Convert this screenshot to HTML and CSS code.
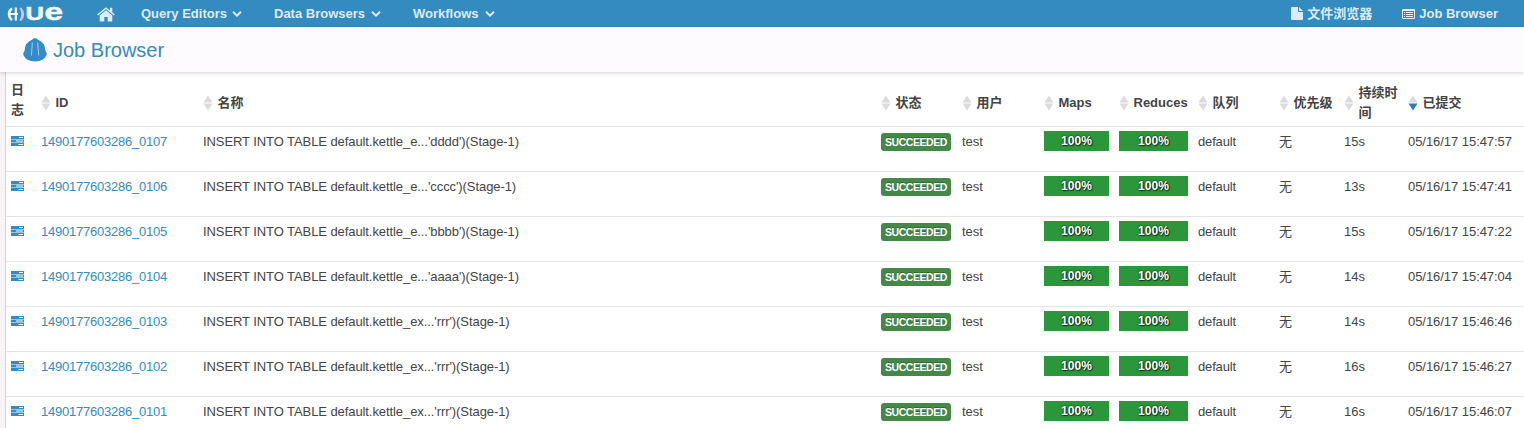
FILE: index.html
```html
<!DOCTYPE html>
<html lang="zh-CN">
<head>
<meta charset="utf-8">
<title>Job Browser</title>
<link rel="stylesheet" href="styles.css">
</head>
<body>
<svg class="defs" aria-hidden="true">
  <symbol id="chevron" viewBox="0 0 10 8"><path d="M1 1.800 5 5.600 9 1.800" fill="none" stroke="currentColor" stroke-width="2"/></symbol>
  <symbol id="tasks" viewBox="0 0 13 10"><path fill="currentColor" fill-rule="evenodd" d="M0 0h13v3H0zM8 1v1h4V1zM0 3.600h13v2.800H0zM5 4.500v1h7v-1zM0 7h13v3H0zM7.500 8v1H12V8z"/></symbol>
  <symbol id="sort" viewBox="0 0 10 16"><path class="up" d="M5 .5 9.500 7.500h-9z"/><path class="down" d="M5 15.500.5 8.500h9z"/></symbol>
</svg>
<nav class="navbar">
  <a class="logo"><svg width="58" height="27" viewBox="0 0 58 27">
    <g fill="none" stroke="#f5f8fc"><path d="M5 8.500Q2 10.500 2 14t3 6" stroke-width="2.500"/><path d="M8.800 7.500v13M2.500 14h8.500" stroke-width="2.200"/></g>
    <path d="M12.500 8q3.500 6 0 12.500l1.800.5q6-6.500 0-13.500z" fill="#cfc0f2"/>
    <text class="logo-text" x="18.500" y="20" textLength="18.500" lengthAdjust="spacingAndGlyphs">U</text>
    <text class="logo-text logo-e" x="37.500" y="20" textLength="18.500" lengthAdjust="spacingAndGlyphs">e</text>
  </svg></a>
  <a class="home"><svg width="18" height="15" viewBox="0 0 18 15"><path fill="currentColor" d="M9 3.300 15.300 8.600V14q0 .6-.6.6h-4V10H7.300v4.600h-4q-.6 0-.6-.6V8.600z"/><path fill="none" stroke="currentColor" stroke-width="1.500" d="M.6 8 9 1.200 17.400 8"/><path fill="currentColor" d="M13 .8h2.300v5L13 4z"/></svg></a>
  <a class="menu editors"><span>Query Editors</span><svg width="10" height="8"><use href="#chevron"/></svg></a>
  <a class="menu browsers"><span>Data Browsers</span><svg width="10" height="8"><use href="#chevron"/></svg></a>
  <a class="menu workflows"><span>Workflows</span><svg width="10" height="8"><use href="#chevron"/></svg></a>
  <a class="right files"><svg width="12" height="13" viewBox="0 0 12 13"><path fill="currentColor" d="M1 0h6v5h5v7q0 1-1 1H1q-1 0-1-1V1q0-1 1-1M8 0l4 4H8z"/></svg><span>文件浏览器</span></a>
  <a class="right jobs"><svg width="13" height="10" viewBox="0 0 13 10"><path fill="currentColor" fill-rule="evenodd" d="M1 0h11q1 0 1 1v8q0 1-1 1H1q-1 0-1-1V1q0-1 1-1M1 2v7h11V2z"/><path stroke="currentColor" d="M2 3.500h1M4 3.500h7M2 5.500h1M4 5.500h7M2 7.500h1M4 7.500h7"/></svg><span>Job Browser</span></a>
</nav>
<header class="subnav">
  <svg width="24" height="24" viewBox="0 0 24 24"><path fill="#338bc8" d="M9.500 1.500Q9.500.3 12 .3t2.500 1.200Q22 4 22.500 13q1.500 1.500 1.300 3.500Q21 23.500 12 23.500T.2 16.500Q0 14.500 1.500 13 2 4 9.500 1.500"/><path d="M9.300 4.500 8.500 17.500M14.700 4.500l1 13" stroke="#a5cdea" fill="none"/></svg>
  <h1>Job Browser</h1>
</header>
<main class="panel">
<table>
  <colgroup><col class="c-log"><col class="c-id"><col class="c-name"><col class="c-status"><col class="c-user"><col class="c-maps"><col class="c-reduces"><col class="c-queue"><col class="c-priority"><col class="c-duration"><col class="c-date"></colgroup>
  <thead><tr id="head"></tr></thead>
  <tbody id="jobs"></tbody>
</table>
</main>
<script src="jobs.js"></script>
</body>
</html>
```
FILE: styles.css
```css
* { box-sizing: border-box; }
body {
  margin: 0;
  height: 428px;
  overflow: hidden;
  background: #f7f3f7;
  color: #444;
  font: 13px/20px "Liberation Sans", Arial, "Noto Sans CJK SC", sans-serif;
}
.defs { position: absolute; width: 0; height: 0; }
.navbar {
  display: flex;
  align-items: center;
  height: 27px;
  padding: 0 26px 0 7px;
  background: #338bbf;
  color: #dcebf7;
  font-weight: bold;
}
.navbar a { display: flex; align-items: center; white-space: nowrap; }
.navbar svg { display: block; flex: none; }
.navbar span { padding-top: 1px; }
.logo { width: 90px; }
.logo svg { overflow: visible; }
.logo-text { fill: #f5f8fc; stroke: #f5f8fc; stroke-width: .5px; font: bold 18px "Liberation Sans", sans-serif; }
.logo-e { font-size: 23px; }
.home { width: 44px; padding-top: 1px; }
.menu { justify-content: space-between; padding-top: 1px; }
.menu span { padding: 0; }
.editors { width: 101px; }
.browsers { width: 107px; margin-left: 32px; }
.workflows { width: 82px; margin-left: 32px; }
.right { gap: 4px; }
.files { margin-left: auto; }
.jobs { margin-left: 30px; gap: 4px; }
.subnav {
  position: relative;
  display: flex;
  align-items: center;
  gap: 6px;
  height: 45px;
  padding-left: 23px;
  background: #fefbfe;
  box-shadow: 0 1px 4px rgba(0, 0, 0, .18);
}
.subnav h1 { margin: 0; font-size: 20px; font-weight: normal; color: #338bbf; }
.panel { margin-left: 5px; height: 356px; background: #fff; border-left: 1px solid #d5d3d6; }
table { width: 1518px; table-layout: fixed; border-collapse: separate; border-spacing: 0; }
.c-log { width: 30px; }
.c-id { width: 162px; }
.c-name { width: 678px; }
.c-status { width: 81px; }
.c-user { width: 82px; }
.c-maps { width: 75px; }
.c-reduces { width: 79px; }
.c-queue { width: 81px; }
.c-priority { width: 65px; }
.c-duration { width: 64px; }
.c-date { width: 121px; }
th { height: 54px; padding: 7px 5px 0; text-align: left; vertical-align: middle; white-space: nowrap; }
th:first-child { padding: 2px 5px 0; }
.heading { display: flex; align-items: center; gap: 5px; }
.sort { flex: none; width: 10px; height: 16px; margin-left: -.5px; }
.up, .down { fill: #dcdadd; }
.sorted { --active: #2b7fb8; }
.down { fill: var(--active, #dcdadd); }
td { height: 45px; padding: 5px 5px 0; border-top: 1px solid #e4e4e4; vertical-align: top; white-space: nowrap; }
td svg { display: block; margin-top: 4px; color: #338bbf; }
.id { color: #338bbf; letter-spacing: -.23px; }
.name { letter-spacing: -.08px; }
.queue { letter-spacing: -.15px; }
.date { letter-spacing: -.05px; }
.badge {
  display: block;
  width: 70px;
  height: 18px;
  margin-top: 1px;
  border-radius: 3px;
  background: #468847;
  color: #fff;
  font-size: 10.500px;
  line-height: 18px;
  font-weight: bold;
  text-align: center;
  text-shadow: 0 -1px 0 rgba(0, 0, 0, .25);
}
.badge span { display: inline-block; letter-spacing: -.45px; }
.bar {
  height: 20px;
  margin-top: -1px;
  background: #2b973a;
  color: #fff;
  font-size: 12px;
  line-height: 20px;
  font-weight: bold;
  text-align: center;
  letter-spacing: .1px;
  text-shadow: 0 0 2px #000, 1px 1px 1px rgba(0, 0, 0, .5);
}
```
FILE: jobs.js
```javascript
const headings = ["日<br>志", "ID", "名称", "状态", "用户", "Maps", "Reduces", "队列", "优先级", "持续时<br>间", "已提交"];
document.getElementById("head").innerHTML = headings.map((label, i) => {
  const icon = i ? '<svg class="sort"><use href="#sort"/></svg>' : "";
  return `<th class="${i === 10 ? "sorted" : ""}"><div class="heading">${icon}<span>${label}</span></div></th>`;
}).join("");

const jobs = [
  ["0107", "e...'dddd'", "15s", "15:47:57"],
  ["0106", "e...'cccc'", "13s", "15:47:41"],
  ["0105", "e...'bbbb'", "15s", "15:47:22"],
  ["0104", "e...'aaaa'", "14s", "15:47:04"],
  ["0103", "ex...'rrr'", "14s", "15:46:46"],
  ["0102", "ex...'rrr'", "16s", "15:46:27"],
  ["0101", "ex...'rrr'", "16s", "15:46:07"]
];
document.getElementById("jobs").innerHTML = jobs.map(([id, name, duration, time]) => `<tr>
  <td><svg width="13" height="10"><use href="#tasks"/></svg></td>
  <td class="id">1490177603286_${id}</td>
  <td class="name">INSERT INTO TABLE default.kettle_${name})(Stage-1)</td>
  <td><div class="badge"><span>SUCCEEDED</span></div></td>
  <td>test</td>
  <td><div class="bar">100%</div></td>
  <td><div class="bar">100%</div></td>
  <td class="queue">default</td><td>无</td><td>${duration}</td>
  <td class="date">05/16/17 ${time}</td>
</tr>`).join("");
```
